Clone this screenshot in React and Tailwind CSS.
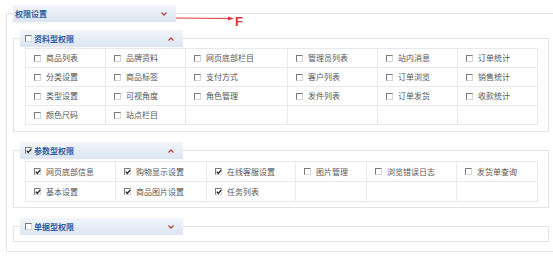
import React from "react";

const font = { fontFamily: '"Noto Sans CJK SC", "Noto Sans", sans-serif' };

const group1 = {
  widths: ["w-[80px]", "w-[80px]", "w-[102px]", "w-[90px]", "w-[80px]", "w-[80px]"],
  rowH: "h-[19px]",
  rows: [
    ["商品列表", "品牌资料", "网页底部栏目", "管理员列表", "站内消息", "订单统计"],
    ["分类设置", "商品标签", "支付方式", "客户列表", "订单浏览", "销售统计"],
    ["类型设置", "可视角度", "角色管理", "发件列表", "订单发货", "收款统计"],
    ["颜色尺码", "站点栏目", "", "", "", ""],
  ],
  checked: [],
};

const group2 = {
  widths: ["w-[90px]", "w-[91px]", "w-[89px]", "w-[71px]", "w-[90px]", "w-[81px]"],
  rowH: "h-[20px]",
  rows: [
    ["网页底部信息", "购物显示设置", "在线客服设置", "图片管理", "浏览错误日志", "发货单查询"],
    ["基本设置", "商品图片设置", "任务列表", "", "", ""],
  ],
  checked: ["网页底部信息", "购物显示设置", "在线客服设置", "基本设置", "商品图片设置", "任务列表"],
};

const Check = ({ on }) => (
  <span className="relative inline-block w-[7px] h-[7px] shrink-0 bg-white border-t border-l border-t-[#7a7a7a] border-l-[#7a7a7a] border-b border-r border-b-[#d6d6d6] border-r-[#d6d6d6]">
    {on && (
      <svg className="absolute left-0 top-0" width="6" height="6" viewBox="0 0 6 6">
        <polyline points="0.8,2.6 2.3,4.4 5.3,0.8" fill="none" stroke="#222" strokeWidth="1.3" />
      </svg>
    )}
  </span>
);

const Chevron = ({ up }) => (
  <svg width="6" height="4" viewBox="0 0 6 4">
    <polyline
      points={up ? "0.5,3.5 3,1 5.5,3.5" : "0.5,0.5 3,3 5.5,0.5"}
      fill="none"
      stroke="#b4493a"
      strokeWidth="1.3"
    />
  </svg>
);

const Header = ({ title, box, on, up }) => (
  <div className="flex items-center justify-between h-[17px] w-[163px] bg-linear-to-b from-[#f2f6fb] to-[#dce5f1] pl-[5px] pr-[9px]">
    <div className="flex items-center gap-[1px] text-[8px] font-bold text-[#2f5d9f] leading-none">
      {box && <Check on={on} />}
      <span className={box ? "ml-[1px]" : "-ml-[3px]"}>{title}</span>
    </div>
    <Chevron up={up} />
  </div>
);

const Grid = ({ g }) => (
  <table className="ml-[5px] w-[512px] border-collapse table-fixed">
    <tbody>
      {g.rows.map((row, i) => (
        <tr key={i}>
          {row.map((c, j) => (
            <td key={j} className={`${g.widths[j]} ${g.rowH} border border-[#e6e9ee] p-0`}>
              {c && (
                <div className="flex items-center gap-[5px] pl-[8px] text-[8px] text-[#555] leading-none">
                  <Check on={g.checked.includes(c)} />
                  <span>{c}</span>
                </div>
              )}
            </td>
          ))}
        </tr>
      ))}
    </tbody>
  </table>
);

export default function App() {
  return (
    <div className="relative w-[553px] h-[263px] bg-white overflow-hidden" style={font}>
      <fieldset className="ml-[6px] mt-[5px] w-[550px] border border-[#e4e4e4] px-[6px] pt-[8px] pb-[9px]">
        <legend className="p-0">
          <Header title="权限设置" up={false} />
        </legend>

        <fieldset className="w-[536px] border border-[#e4e4e4] px-[6px] pt-[1px] pb-[6px]">
          <legend className="p-0">
            <Header title="资料型权限" box on={false} up />
          </legend>
          <Grid g={group1} />
        </fieldset>

        <fieldset className="mt-[10px] w-[536px] border border-[#e4e4e4] px-[6px] pt-[2px] pb-[5px]">
          <legend className="p-0">
            <Header title="参数型权限" box on up />
          </legend>
          <Grid g={group2} />
        </fieldset>

        <fieldset className="mt-[10px] w-[536px] border border-[#e4e4e4] px-[6px]">
          <legend className="p-0">
            <Header title="单据型权限" box on={false} up={false} />
          </legend>
          <div className="h-[6px]" />
        </fieldset>
      </fieldset>

      {/* annotation arrow */}
      <div className="absolute left-[176px] top-[13px] flex items-start">
        <svg width="59" height="10" viewBox="0 0 59 10">
          <line x1="0" y1="5" x2="54" y2="5.5" stroke="#e0353a" strokeWidth="1" />
          <polygon points="52,3.5 58,5.5 52,7.5" fill="#e0353a" />
        </svg>
        <span className="text-[13px] leading-none font-bold text-[#e0353a] mt-[2px]" style={{ fontFamily: '"Liberation Sans", sans-serif' }}>
          F
        </span>
      </div>
    </div>
  );
}
